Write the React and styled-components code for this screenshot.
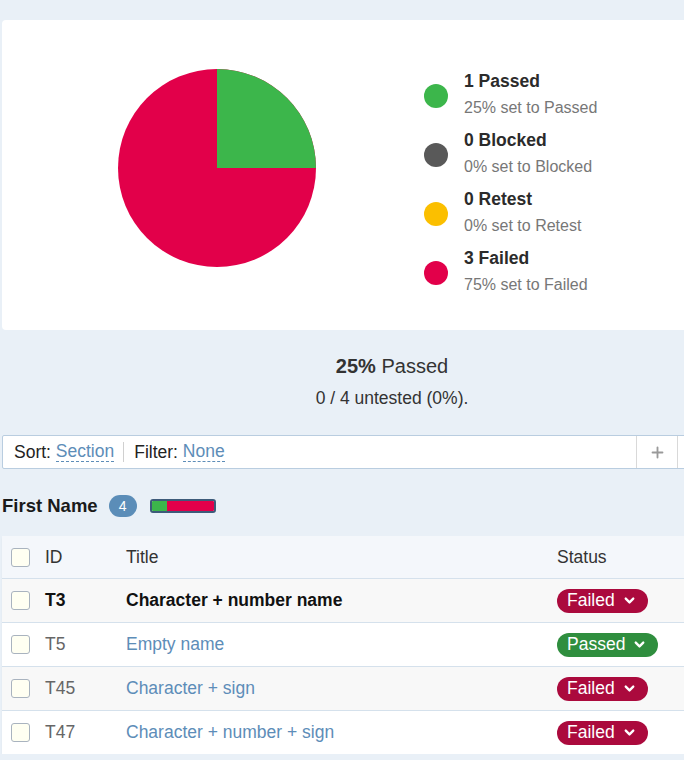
import React from 'react'
import styled, { createGlobalStyle } from 'styled-components'
import { ChevronDown, Plus } from 'lucide-react'

const GlobalStyle = createGlobalStyle`
  body {
    margin: 0;
    background: #e9f0f7;
    overflow: hidden;
    font-family: "Liberation Sans", Arial, sans-serif;
    color: #333;
  }
`

const legend = [
  { count: 1, label: 'Passed', pct: 25, color: '#3cb64b' },
  { count: 0, label: 'Blocked', pct: 0, color: '#595959' },
  { count: 0, label: 'Retest', pct: 0, color: '#fbbf00' },
  { count: 3, label: 'Failed', pct: 75, color: '#e2004a' },
]

const tests = [
  { id: 'T3', title: 'Character + number name', status: 'Failed', active: true },
  { id: 'T5', title: 'Empty name', status: 'Passed' },
  { id: 'T45', title: 'Character + sign', status: 'Failed' },
  { id: 'T47', title: 'Character + number + sign', status: 'Failed' },
]

const App = () => {
  return (
    <Page>
      <GlobalStyle />
      <ChartCard>
        <svg width="198" height="198" viewBox="0 0 198 198">
          <circle cx="99" cy="99" r="99" fill="#e2004a" />
          <path d="M99 99 L99 0 A99 99 0 0 1 198 99 Z" fill="#3cb64b" />
        </svg>
        <Legend>
          {legend.map((l) => (
            <LegendItem key={l.label}>
              <Dot color={l.color} />
              <div>
                <LegendTitle>{l.count} {l.label}</LegendTitle>
                <LegendSub>{l.pct}% set to {l.label}</LegendSub>
              </div>
            </LegendItem>
          ))}
        </Legend>
      </ChartCard>

      <Summary>
        <Headline><b>25%</b> Passed</Headline>
        <Untested>0 / 4 untested (0%).</Untested>
      </Summary>

      <Toolbar>
        <ToolLeft>
          Sort: <ToolLink>Section</ToolLink>
          <Divider />
          Filter: <ToolLink>None</ToolLink>
        </ToolLeft>
        <ToolButton>
          <Plus size={17} strokeWidth={2.6} color="#9a9a9a" />
        </ToolButton>
        <ToolButton wide />
      </Toolbar>

      <GroupHeader>
        <GroupName>First Name</GroupName>
        <CountBadge>4</CountBadge>
        <MiniBar>
          <MiniSeg color="#3cb64b" style={{ width: '25%' }} />
          <MiniSeg color="#e2004a" style={{ width: '75%' }} />
        </MiniBar>
      </GroupHeader>

      <Table>
        <HeadRow>
          <Cell><Check /></Cell>
          <Cell>ID</Cell>
          <Cell>Title</Cell>
          <Cell>Status</Cell>
        </HeadRow>
        {tests.map((t, i) => (
          <Row key={t.id} shaded={i % 2 === 0}>
            <Cell><Check /></Cell>
            <IdCell active={t.active}>{t.id}</IdCell>
            <TitleCell active={t.active}>{t.title}</TitleCell>
            <Cell>
              <StatusPill status={t.status}>
                {t.status}
                <ChevronDown size={15} strokeWidth={3.8} />
              </StatusPill>
            </Cell>
          </Row>
        ))}
      </Table>
    </Page>
  )
}

export default App

const Page = styled.div`
  width: 780px;
  padding: 20px 0 0 2px;
`

const ChartCard = styled.div`
  background: #fff;
  border-radius: 4px;
  height: 310px;
  box-sizing: border-box;
  padding: 49px 0 0 116px;
  display: flex;
  align-items: flex-start;
`

const Legend = styled.div`
  margin-left: 108px;
  padding-top: 2px;
  display: flex;
  flex-direction: column;
  gap: 12px;
`

const LegendItem = styled.div`
  display: flex;
  align-items: center;
  gap: 16px;
  height: 47px;
`

const Dot = styled.span`
  width: 24px;
  height: 24px;
  border-radius: 50%;
  background: ${(p) => p.color};
  margin-top: 3px;
`

const LegendTitle = styled.div`
  font-weight: bold;
  font-size: 17.5px;
  line-height: 20px;
  color: #2b2b2b;
`

const LegendSub = styled.div`
  font-size: 16px;
  line-height: 20px;
  margin-top: 7px;
  color: #777;
`

const Summary = styled.div`
  text-align: center;
  padding-top: 24px;
`

const Headline = styled.div`
  font-size: 20px;
  line-height: 24px;
  color: #333;
`

const Untested = styled.div`
  font-size: 17.5px;
  line-height: 22px;
  margin-top: 9px;
  color: #333;
`

const Toolbar = styled.div`
  margin-top: 26px;
  height: 34px;
  box-sizing: border-box;
  background: #fff;
  border: 1px solid #b9cde0;
  border-radius: 2px;
  display: flex;
  align-items: stretch;
`

const ToolLeft = styled.div`
  flex: 1;
  display: flex;
  align-items: center;
  padding-left: 11px;
  font-size: 17.5px;
  color: #222;
  white-space: pre;
`

const ToolLink = styled.span`
  color: #5d8db8;
  border-bottom: 1px dashed #5d8db8;
  line-height: 19px;
`

const Divider = styled.span`
  width: 1px;
  height: 20px;
  background: #d0d0d0;
  margin: 0 10px 0 9px;
`

const ToolButton = styled.div`
  width: ${(p) => (p.wide ? '103px' : '40px')};
  border-left: 1px solid #d9d9d9;
  display: flex;
  align-items: center;
  justify-content: center;
`

const GroupHeader = styled.div`
  margin-top: 22px;
  height: 30px;
  display: flex;
  align-items: center;
`

const GroupName = styled.span`
  font-weight: bold;
  font-size: 18.5px;
  color: #1a1a1a;
`

const CountBadge = styled.span`
  margin-left: 11px;
  width: 28px;
  height: 22px;
  border-radius: 11px;
  background: #5b8db8;
  color: #fff;
  font-size: 14px;
  display: flex;
  align-items: center;
  justify-content: center;
`

const MiniBar = styled.div`
  margin-left: 13px;
  width: 66px;
  height: 14px;
  box-sizing: border-box;
  border: 2px solid #3d5b7a;
  border-radius: 3px;
  display: flex;
  overflow: hidden;
`

const MiniSeg = styled.div`
  background: ${(p) => p.color};
`

const Table = styled.div`
  margin-top: 15px;
  background: #fff;
  border-radius: 3px;
  box-shadow: 0 1px 2px rgba(0, 0, 0, 0.06);
`

const gridCols = `
  display: grid;
  grid-template-columns: 43px 81px 431px 1fr;
  align-items: center;
`

const HeadRow = styled.div`
  ${gridCols}
  height: 42px;
  background: #f4f7fb;
  border-bottom: 1px solid #d5e1ec;
  font-size: 17.5px;
  color: #333;
`

const Row = styled.div`
  ${gridCols}
  height: 43px;
  background: ${(p) => (p.shaded ? '#f8f8f8' : '#fff')};
  border-bottom: 1px solid #d5e1ec;
  font-size: 17.5px;

  &:last-child {
    border-bottom: none;
  }
`

const Cell = styled.div`
  display: flex;
  align-items: center;
`

const IdCell = styled(Cell)`
  color: ${(p) => (p.active ? '#111' : '#666')};
  font-weight: ${(p) => (p.active ? 'bold' : 'normal')};
`

const TitleCell = styled(Cell)`
  color: ${(p) => (p.active ? '#111' : '#5d8db8')};
  font-weight: ${(p) => (p.active ? 'bold' : 'normal')};
`

const Check = styled.span`
  margin-left: 9px;
  width: 17px;
  height: 17px;
  border: 1px solid #a9b3bf;
  border-radius: 3px;
  background: #fffff2;
`

const StatusPill = styled.span`
  display: inline-flex;
  align-items: center;
  gap: 7px;
  height: 24px;
  padding: 0 11px 0 10px;
  border-radius: 12px;
  color: #fff;
  font-size: 17.5px;
  background: ${(p) => (p.status === 'Passed' ? '#2f8e3e' : '#ab0a3d')};
`
